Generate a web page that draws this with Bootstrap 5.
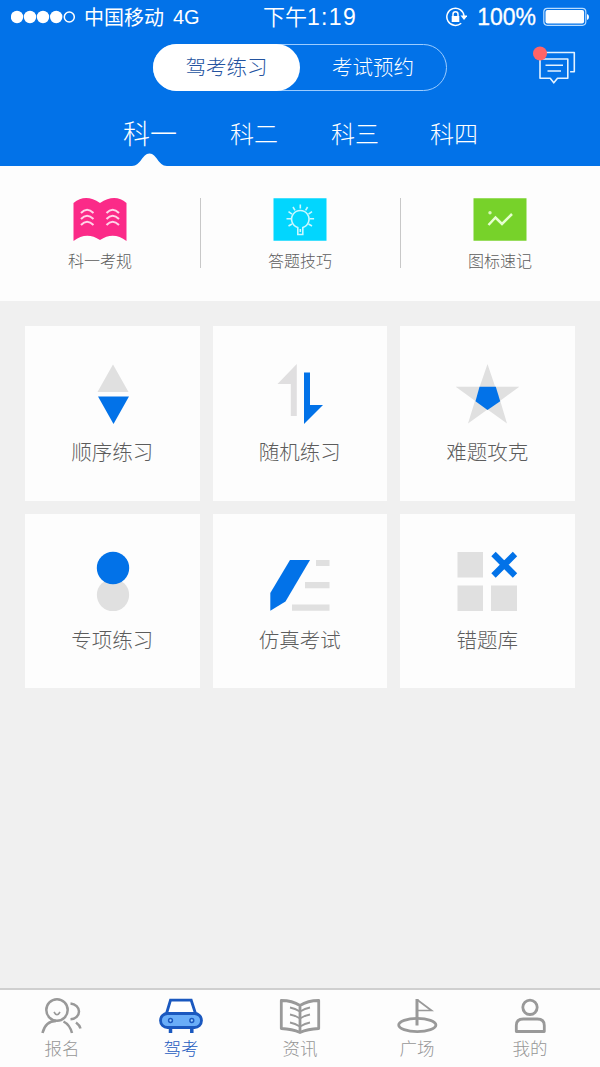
<!DOCTYPE html>
<html lang="zh-CN">
<head>
<meta charset="utf-8">
<meta name="viewport" content="width=device-width, initial-scale=1">
<title>驾考练习</title>
<link href="https://cdn.jsdelivr.net/npm/bootstrap@5.3.0/dist/css/bootstrap.min.css" rel="stylesheet">
<style>
:root { --brand: #0272e8; --soft: #e0e0e0; }
body { font-family: "Noto Sans CJK SC", sans-serif; font-weight: 300; background: #f0f0f0; height: 1067px; line-height: 1; overflow: hidden; }
svg { display: block; flex: none; }
.app-head { background: var(--brand); height: 166px; color: #fff; }
.status { height: 34px; font-weight: 400; display: grid; grid-template-columns: 252px 94px 1fr; padding: 0 11px 0 11px; }
.latin { font-family: "Liberation Sans", sans-serif; }
.carrier { font-size: 20px; margin-left: 8px; }
.net { font-size: 20px; margin-left: 9px; }
.clock { font-size: 22px; font-weight: 350; white-space: nowrap; padding-bottom: 1px; }
.clock .latin { font-size: 23px; letter-spacing: 1.3px; }
.percent { font-size: 23px; margin: 0 7px 0 10px; -webkit-text-stroke: .3px #fff; }
.title-row { height: 57px; padding-top: 10px; }
.switcher { width: 294px; height: 47px; border-radius: 24px; border: 1px solid #9cccff; font-size: 20.5px; padding-bottom: 0; }
.switcher .on { width: 147px; margin: -1px 0 -1px -1px; background: #fff; color: #24539f; border-radius: 24px; }
.switcher span { margin-top: -2px; }
.msg { left: 532px; top: 45px; }
.subjects { display: grid; grid-template-columns: 100px 108px 94px 104px; margin-left: 100px; height: 75px; font-size: 24px; }
.subjects > div { padding-top: 8px; }
.subjects .active { font-size: 27px; }
.notch { left: 30px; bottom: -1px; }
.tools { background: #fdfdfd; height: 135px; font-size: 16px; color: #5c5c5c; padding-top: 32px; }
.tools > div { width: 200px; height: 70px; }
.tools > div + div { box-shadow: inset 1px 0 #c8c8c8; }
.tools span { margin-top: 11px; }
.tiles { display: grid; grid-template-columns: repeat(3, 174.5px); gap: 13px; padding: 25px; }
.tile { height: 174.5px; background: #fdfdfd; color: #5c5c5c; font-size: 20.5px; padding-top: 36px; }
.tile span { margin-top: 15px; }
.tabbar { height: 79px; border-top: 2px solid #cfcfcf; background: #fdfdfd; display: grid; grid-template-columns: 124px 114px 124px 110px 116px; font-size: 17.5px; color: #969696; padding-top: 6px; }
.tabbar span { margin-top: 2.5px; }
.tabbar .active { color: #1f5cc0; }
</style>
</head>
<body class="d-flex flex-column">
<header class="app-head position-relative">
  <div class="status align-items-center">
    <div class="d-flex align-items-center">
      <svg width="65" height="14" fill="#fff"><circle cx="6" cy="7" r="6.2"/><circle cx="19" cy="7" r="6.2"/><circle cx="32" cy="7" r="6.2"/><circle cx="45.2" cy="7" r="6.2"/><circle cx="58.3" cy="7" r="5" fill="none" stroke="#fff" stroke-width="1.5"/></svg>
      <span class="carrier">中国移动</span><span class="net latin">4G</span>
    </div>
    <div class="clock">下午<span class="latin">1:19</span></div>
    <div class="d-flex align-items-center justify-content-end">
      <svg width="23" height="20" viewBox="444 6 23 20" fill="none" stroke="#fff" stroke-width="1.5"><path d="M461.200 22.200A8.600 8.600 0 1 1 464 15"/><path d="M460.500 14.500h7l-3.500 4.500z" fill="#fff" stroke="none"/><path d="M451.700 15h7.600v6h-7.600z" fill="#fff" stroke="none"/><path d="M453 15.500v-2.200a2.500 2.500 0 0 1 5 0v2.200"/></svg>
      <span class="percent latin">100%</span>
      <svg width="46" height="20" fill="none"><rect x=".8" y="1.300" width="42" height="17" rx="3.500" stroke="#b8dcff" stroke-width="1.200"/><rect x="2.500" y="3" width="38.600" height="13.600" rx="2" fill="#fff"/><path d="M44 7q2 .5 2 3t-2 3z" fill="#fff"/></svg>
    </div>
  </div>
  <div class="title-row d-flex justify-content-center">
    <div class="switcher d-flex">
      <div class="on d-flex align-items-center justify-content-center"><span>驾考练习</span></div>
      <div class="flex-fill d-flex align-items-center justify-content-center"><span>考试预约</span></div>
    </div>
    <svg class="msg position-absolute" width="45" height="40" viewBox="532 45 45 40" fill="none" stroke="#e4f2ff" stroke-width="1.600" stroke-linejoin="round"><path d="M542 52.500h32.300v19.200h-4.200"/><path d="M540 59h27.800v19.300h-10.300l-3.700 4.500-3.600-4.500H540z"/><path d="M545.500 65.200H563M547.500 71H561"/><circle cx="540" cy="53.500" r="7" fill="#ff6468" stroke="none"/></svg>
  </div>
  <nav class="subjects align-items-center text-center">
    <div class="active position-relative h-100 d-flex align-items-center justify-content-center">科一<svg class="notch position-absolute" width="40" height="15" viewBox="0 0 40 15" fill="#fdfdfd"><path d="M2 15V14C11 14 12 1.500 19.500 1.500S28 14 37 14v1z"/></svg></div>
    <div>科二</div><div>科三</div><div>科四</div>
  </nav>
</header>

<section class="tools d-flex text-center">
  <div class="d-flex flex-column align-items-center">
    <svg width="54" height="43" viewBox="73 198 54 43"><path d="M73.500 203q12-10 26.500 0q15-10 26.500 0v38q-13-10-26.500-1q-13.500-9-26.500 1z" fill="#fb2a88"/><path d="M81 213q6-6.500 12.500 0M81 219q6-6.500 12.500 0M81 225q6-6.500 12.500 0M106.500 213q6-6.500 12.500 0M106.500 219q6-6.500 12.500 0M106.500 225q6-6.500 12.500 0" fill="none" stroke="#ffd3e8" stroke-width="2"/></svg>
    <span>科一考规</span>
  </div>
  <div class="d-flex flex-column align-items-center">
    <svg width="54" height="43" viewBox="273 198 54 43" fill="none" stroke="#c9f8ff" stroke-width="1.600"><path d="M273.500 198.300h53v42.400h-53z" fill="#02d6fe" stroke="none"/><path d="M297.800 227.500a8.700 8.700 0 1 1 5 0V234.500h-5z"/><path d="M300.300 204.500v4M293 207l2 3.300M307.600 207l-2 3.300M288.500 211.700l3.500 2.400M312 211.700l-3.500 2.400M286.500 218.800h4.500M309.600 218.800h4.500M288.500 226l3.500-2M312 226l-3.500-2M300.300 229v3"/></svg>
    <span>答题技巧</span>
  </div>
  <div class="d-flex flex-column align-items-center">
    <svg width="54" height="43" viewBox="473 198 54 43"><path d="M473.500 198.300h53v42.400h-53z" fill="#77d22a"/><path d="M488.500 225l7-7.500 6.500 6.500 10-10" fill="none" stroke="#e6ffd0" stroke-width="2.500"/><circle cx="490" cy="212.700" r="1.700" fill="#d6f7b8"/></svg>
    <span>图标速记</span>
  </div>
</section>

<main class="tiles text-center">
  <div class="tile d-flex flex-column align-items-center">
    <svg width="64" height="64" viewBox="80 362 64 64"><path d="M113 364.500L128.500 392h-31z" fill="#e0e0e0"/><path d="M98 396.500h31L113.500 424z" fill="#0272e8"/></svg>
    <span>顺序练习</span>
  </div>
  <div class="tile d-flex flex-column align-items-center">
    <svg width="64" height="64" viewBox="268 362 64 64"><path d="M296.800 364v52h-6v-32H277.500z" fill="#e0dfe0"/><path d="M304 372.500h6V405h13L304 424z" fill="#0272e8"/></svg>
    <span>随机练习</span>
  </div>
  <div class="tile d-flex flex-column align-items-center">
    <svg width="64" height="64" viewBox="455 362 64 64"><path d="M487.500 364l7.700 22.800h24l-19 14 6.800 22.700-19.500-14-19.500 14 7-22.700-19.300-14h24z" fill="#e0e0e0"/><path d="M479.500 386.800h16.300l4.400 14.400-12.700 8.800-12-8.800z" fill="#0272e8"/></svg>
    <span>难题攻克</span>
  </div>
  <div class="tile d-flex flex-column align-items-center">
    <svg width="64" height="64" viewBox="80 550 64 64"><circle cx="113" cy="595" r="16.100" fill="#e0e0e0"/><circle cx="113" cy="568" r="16.200" fill="#0272e8"/></svg>
    <span>专项练习</span>
  </div>
  <div class="tile d-flex flex-column align-items-center">
    <svg width="64" height="64" viewBox="268 550 64 64"><path d="M290 560h20l-24.500 41.500-15.200 9.300V593z" fill="#0272e8"/><path d="M316 560h13.500v6H316zM305 582h24.500v6.300H305zM292 604.500h37.500v6.300H292z" fill="#e0e0e0"/></svg>
    <span>仿真考试</span>
  </div>
  <div class="tile d-flex flex-column align-items-center">
    <svg width="64" height="64" viewBox="455 550 64 64"><path d="M457.500 552H483v25.500h-25.500zM457.500 585.500H483V611h-25.500zM491 585.500h26V611h-26z" fill="#e0e0e0"/><path d="M493.500 554l21.500 21.500M515 554l-21.500 21.500" stroke="#0272e8" stroke-width="6.200"/></svg>
    <span>错题库</span>
  </div>
</main>

<nav class="tabbar mt-auto text-center">
  <div class="d-flex flex-column align-items-center">
    <svg width="46" height="40" viewBox="39 996 46 40" fill="none" stroke="#999" stroke-width="2.500"><circle cx="57" cy="1010" r="10.700"/><path d="M42.500 1033c2-8 7-12 13.500-12M63.500 1021.500c4 2 7 6 8.500 11.500M70.500 1003.500c5 .5 8.500 4 8.500 8s-3.500 7.500-8.500 7.800M76 1022.500q3.500 2.500 4.500 6"/><path d="M54 1012q3 5.500 6 0" stroke-width="1.600"/></svg>
    <span>报名</span>
  </div>
  <div class="active d-flex flex-column align-items-center">
    <svg width="46" height="40" viewBox="158 996 46 40" stroke="#1a58bf" stroke-width="2.800"><path d="M170.500 1027v6M191.800 1027v6" stroke-width="3.500"/><path d="M166.500 1013.500l4-13.300h20.700l4.300 13.300" fill="#fff"/><rect x="160.500" y="1013.500" width="41" height="14" rx="7" fill="#6aaef8"/><circle cx="170.500" cy="1020.500" r="1.900" fill="#9bd0ff" stroke-width="1.500"/><circle cx="191.800" cy="1020.500" r="1.900" fill="#9bd0ff" stroke-width="1.500"/></svg>
    <span>驾考</span>
  </div>
  <div class="d-flex flex-column align-items-center">
    <svg width="46" height="40" viewBox="277 996 46 40" fill="none" stroke="#999" stroke-width="2.800" stroke-linejoin="round"><path d="M281.300 1000.500q11 0 18.700 5q7.700-5 18.700-5v28q-11 .5-18.700 4q-7.700-3.500-18.700-4zM300 1005.500v27"/><path d="M290 1007.500q5 1 10 4q5-3 10-4M290 1014.500q5 1 10 4q5-3 10-4M290 1022.500q5 1 10 4q5-3 10-4" stroke-width="1.800"/></svg>
    <span>资讯</span>
  </div>
  <div class="d-flex flex-column align-items-center">
    <svg width="46" height="40" viewBox="394.500 996 46 40" fill="none" stroke="#999" stroke-width="2.800"><ellipse cx="417.800" cy="1025" rx="18.600" ry="6.600"/><path d="M417.500 999v26.500" stroke-width="3"/><path d="M418 1000l14 10.500h-14" stroke-width="1.700"/></svg>
    <span>广场</span>
  </div>
  <div class="d-flex flex-column align-items-center">
    <svg width="46" height="40" viewBox="507 996 46 40" fill="none" stroke="#999" stroke-width="2.800"><circle cx="530" cy="1007.300" r="7.200"/><path d="M516.300 1031.500v-6q0-6.500 7-6.500h14q7 0 7 6.500v6z" stroke-linejoin="round"/></svg>
    <span>我的</span>
  </div>
</nav>
<script src="https://cdn.jsdelivr.net/npm/bootstrap@5.3.0/dist/js/bootstrap.bundle.min.js"></script>
</body>
</html>
